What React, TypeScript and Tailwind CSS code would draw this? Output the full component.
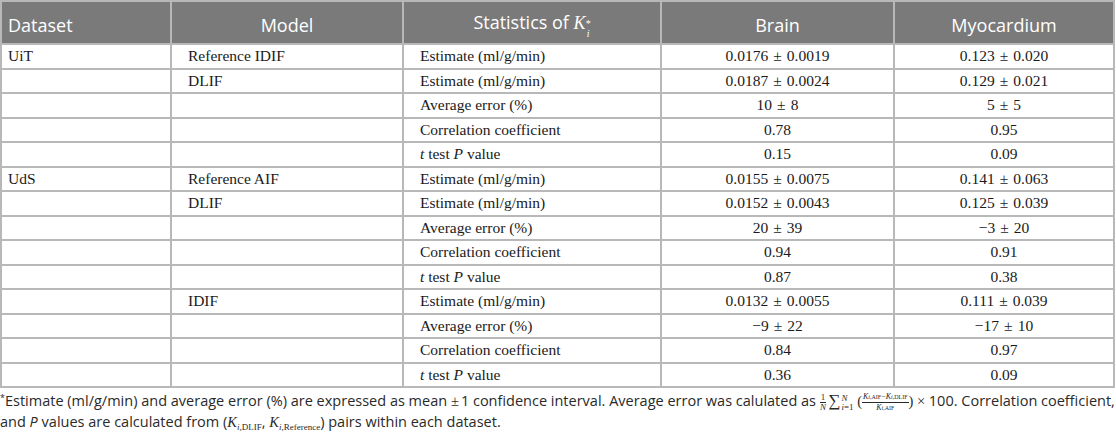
import React from 'react';

type Row = { ds: string; model: string; stat: React.ReactNode; brain: React.ReactNode; myo: React.ReactNode };

const tTest = (
  <>
    <i>t</i> test <i>P</i> value
  </>
);

// value with a math-spaced ± between mean and spread
function pm(a: string, b: string) {
  return (
    <>
      {a}
      <span className="mx-[5px]">±</span>
      {b}
    </>
  );
}

const rows: Row[] = [
  { ds: 'UiT', model: 'Reference IDIF', stat: 'Estimate (ml/g/min)', brain: pm('0.0176', '0.0019'), myo: pm('0.123', '0.020') },
  { ds: '', model: 'DLIF', stat: 'Estimate (ml/g/min)', brain: pm('0.0187', '0.0024'), myo: pm('0.129', '0.021') },
  { ds: '', model: '', stat: 'Average error (%)', brain: pm('10', '8'), myo: pm('5', '5') },
  { ds: '', model: '', stat: 'Correlation coefficient', brain: '0.78', myo: '0.95' },
  { ds: '', model: '', stat: tTest, brain: '0.15', myo: '0.09' },
  { ds: 'UdS', model: 'Reference AIF', stat: 'Estimate (ml/g/min)', brain: pm('0.0155', '0.0075'), myo: pm('0.141', '0.063') },
  { ds: '', model: 'DLIF', stat: 'Estimate (ml/g/min)', brain: pm('0.0152', '0.0043'), myo: pm('0.125', '0.039') },
  { ds: '', model: '', stat: 'Average error (%)', brain: pm('20', '39'), myo: pm('−3', '20') },
  { ds: '', model: '', stat: 'Correlation coefficient', brain: '0.94', myo: '0.91' },
  { ds: '', model: '', stat: tTest, brain: '0.87', myo: '0.38' },
  { ds: '', model: 'IDIF', stat: 'Estimate (ml/g/min)', brain: pm('0.0132', '0.0055'), myo: pm('0.111', '0.039') },
  { ds: '', model: '', stat: 'Average error (%)', brain: pm('−9', '22'), myo: pm('−17', '10') },
  { ds: '', model: '', stat: 'Correlation coefficient', brain: '0.84', myo: '0.97' },
  { ds: '', model: '', stat: tTest, brain: '0.36', myo: '0.09' },
];

const serif = "font-['Liberation_Serif','Times_New_Roman',serif]";

function Ki({ sub }: { sub: string }) {
  return (
    <span className={serif}>
      <i>K</i>
      <span className="text-[9px] relative top-[3px] leading-none">
        <i>i</i>,{sub}
      </span>
    </span>
  );
}

export default function App() {
  return (
    <div className="w-[1116px] h-[441px] bg-white font-['Open_Sans',sans-serif] overflow-hidden">
      <table className="w-[1115px] border-collapse table-fixed">
        <colgroup>
          <col className="w-[170px]" />
          <col className="w-[232px]" />
          <col className="w-[258px]" />
          <col className="w-[233px]" />
          <col />
        </colgroup>
        <thead>
          <tr className="h-[43px] bg-[#7a7a7a] text-white text-[18px]">
            <th className="border-2 border-[#b8b8b8] font-normal text-left align-bottom pl-[6px] pb-[4px]">Dataset</th>
            <th className="border-2 border-[#b8b8b8] font-normal text-center align-bottom pb-[4px]">Model</th>
            <th className="border-2 border-[#b8b8b8] font-normal text-center align-bottom pb-[4px]">
              Statistics of{' '}
              <span className={serif}>
                <i>K</i>
                <span className="inline-flex flex-col text-[10px] leading-[10px] align-[2px]">
                  <span>*</span>
                  <i>i</i>
                </span>
              </span>
            </th>
            <th className="border-2 border-[#b8b8b8] font-normal text-center align-bottom pb-[4px]">Brain</th>
            <th className="border-2 border-[#b8b8b8] font-normal text-center align-bottom pb-[4px]">Myocardium</th>
          </tr>
        </thead>
        <tbody className={`${serif} text-[15.5px] text-[#1a1a1a]`}>
          {rows.map((r, i) => (
            <tr key={i} className="h-[24.5px]">
              <td className="border-2 border-[#b8b8b8] pl-[6px] py-0 leading-[20px]">{r.ds}</td>
              <td className="border-2 border-[#b8b8b8] pl-4 py-0 leading-[20px]">{r.model}</td>
              <td className="border-2 border-[#b8b8b8] pl-4 py-0 leading-[20px]">{r.stat}</td>
              <td className="border-2 border-[#b8b8b8] text-center py-0 leading-[20px]">{r.brain}</td>
              <td className="border-2 border-[#b8b8b8] text-center py-0 leading-[20px]">{r.myo}</td>
            </tr>
          ))}
        </tbody>
      </table>
      <div className="mt-[2px] text-[14.5px] leading-[21px] text-[#2a2a2a] whitespace-nowrap">
        <p className="h-[21px]">
          <span className="text-[9px] relative -top-[5px] leading-none">*</span>Estimate (ml/g/min) and average error (%) are expressed as mean{' '}
          <span className={`${serif} mr-[2px]`}>±</span>1 confidence interval. Average error was calulated as{' '}
          <span className={`${serif} inline-flex flex-col items-center align-middle text-[9px] leading-[9px]`}>
            <span className="border-b border-[#2a2a2a] px-[1px]">1</span>
            <i>N</i>
          </span>
          <span className={`${serif} ml-[2px]`}>
            <span className="text-[17px] leading-none">∑</span>
            <span className="inline-flex flex-col text-[9px] leading-[9px] align-middle ml-[1px]">
              <i>N</i>
              <span>
                <i>i</i>=1
              </span>
            </span>{' '}
            (
            <span className="inline-flex flex-col items-center align-middle text-[8px] leading-[9px]">
              <span className="border-b border-[#2a2a2a] px-[1px]">
                <i>K</i>
                <span className="text-[6px]">
                  <i>i</i>,AIF
                </span>
                −<i>K</i>
                <span className="text-[6px]">
                  <i>i</i>,DLIF
                </span>
              </span>
              <span>
                <i>K</i>
                <span className="text-[6px]">
                  <i>i</i>,AIF
                </span>
              </span>
            </span>
            ) ×{' '}
          </span>
          100. Correlation coefficient,
        </p>
        <p className="h-[21px]">
          and <i>P</i> values are calculated from (<Ki sub="DLIF" />, <Ki sub="Reference" />) pairs within each dataset.
        </p>
      </div>
    </div>
  );
}
